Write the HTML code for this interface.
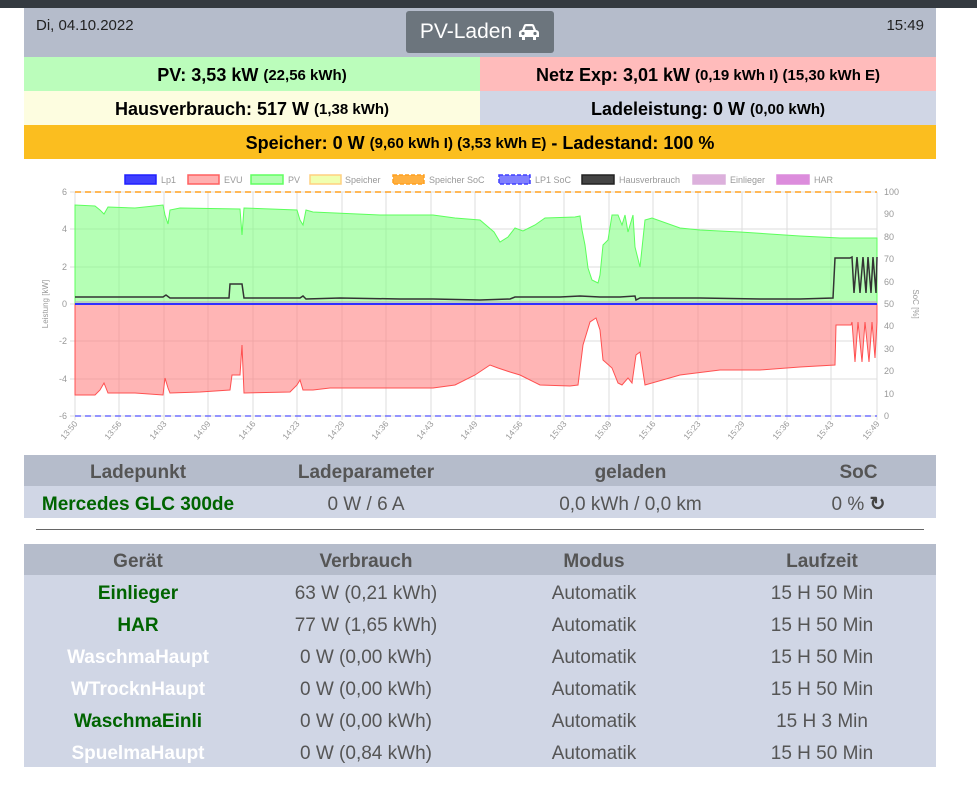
<!DOCTYPE html>
<html><head><meta charset="utf-8"><style>
*{margin:0;padding:0;box-sizing:border-box}
body{width:977px;height:786px;background:#fff;font-family:"Liberation Sans",sans-serif;position:relative;overflow:hidden}
.top{position:absolute;left:0;top:0;width:977px;height:8px;background:#343a40}
.wrap{position:absolute;left:24px;width:912px}
.hdr{top:8px;height:49px;background:#b5bccb}
.row{display:flex;height:34px;align-items:center;font-weight:bold;font-size:18px;color:#000}
.row>div{flex:1;height:100%;display:flex;align-items:center;justify-content:center;white-space:nowrap;padding-top:3px}
.row small{font-size:15px}
table{border-collapse:collapse;width:912px;font-size:19px;color:#555;text-align:center}
th{background:#b5bccb;font-weight:bold;height:31px;color:#555;padding-top:4px}
td{background:#d0d6e5;height:32px;padding-top:5px}
.g{color:#006400;font-weight:bold}
.w{color:#fff;font-weight:bold}
</style></head><body>
<div class="top"></div>
<div class="wrap hdr">
 <div style="position:absolute;left:12px;top:9px;font-size:15px;color:#222">Di, 04.10.2022</div>
 <div style="position:absolute;right:12px;top:9px;font-size:15px;color:#222">15:49</div>
 <div style="position:absolute;left:382px;top:3px;width:148px;height:42px;background:#6c757d;border-radius:3px;color:#fff;font-size:21px;display:flex;align-items:center;justify-content:center;gap:6px">PV-Laden
  <svg width="22" height="18" viewBox="0 0 22 18"><path d="M4 7 L6 2 Q6.5 1 8 1 H14 Q15.5 1 16 2 L18 7 Q21 7.5 21 10 V14 H18 V17 H15 V14 H7 V17 H4 V14 H1 V10 Q1 7.5 4 7Z M6.5 7 H15.5 L14.2 3.3 H7.8Z" fill="#fff"/><circle cx="5" cy="10.5" r="1.6" fill="#6c757d"/><circle cx="17" cy="10.5" r="1.6" fill="#6c757d"/></svg></div>
</div>
<div class="wrap" style="top:57px">
 <div class="row"><div style="background:#bbfdbb">PV: 3,53 kW&nbsp;<small>(22,56 kWh)</small></div><div style="background:#ffbbbb">Netz Exp: 3,01 kW&nbsp;<small>(0,19 kWh I) (15,30 kWh E)</small></div></div>
 <div class="row"><div style="background:#fdfde0">Hausverbrauch: 517 W&nbsp;<small>(1,38 kWh)</small></div><div style="background:#d0d6e5">Ladeleistung: 0 W&nbsp;<small>(0,00 kWh)</small></div></div>
 <div class="row" style="background:#fbbe1f"><div>Speicher: 0 W&nbsp;<small>(9,60 kWh I) (3,53 kWh E)</small>&nbsp;- Ladestand: 100 %</div></div>
</div>
<svg style="position:absolute;left:0;top:165px" width="977" height="290" viewBox="0 165 977 290" font-family="Liberation Sans" font-size="9" fill="#999">
 <g stroke-width="1.5">
  <rect x="125" y="175" width="31" height="9" fill="#4040ff" stroke="#2020ff"/><text x="161" y="183" stroke="none">Lp1</text>
  <rect x="188" y="175" width="31" height="9" fill="#ffb0b0" stroke="#ff6060"/><text x="224" y="183" stroke="none">EVU</text>
  <rect x="251" y="175" width="32" height="9" fill="#b0ffb0" stroke="#60ff60"/><text x="288" y="183" stroke="none">PV</text>
  <rect x="310" y="175" width="31" height="9" fill="#f0ffb0" stroke="#ffd080"/><text x="345" y="183" stroke="none">Speicher</text>
  <rect x="393" y="175" width="31" height="9" fill="#ffb040" stroke="#ffa020" stroke-dasharray="4 2"/><text x="429" y="183" stroke="none">Speicher SoC</text>
  <rect x="499" y="175" width="31" height="9" fill="#8080ff" stroke="#4040ff" stroke-dasharray="4 2"/><text x="535" y="183" stroke="none">LP1 SoC</text>
  <rect x="582" y="175" width="32" height="9" fill="#444" stroke="#222"/><text x="619" y="183" stroke="none">Hausverbrauch</text>
  <rect x="693" y="175" width="32" height="9" fill="#dcb0dc" stroke="#dcb0dc"/><text x="730" y="183" stroke="none">Einlieger</text>
  <rect x="777" y="175" width="32" height="9" fill="#dc8cdc" stroke="#dc8cdc"/><text x="814" y="183" stroke="none">HAR</text>
 </g>
 <g stroke="#ddd" stroke-width="1">
  <path d="M75 192V420M119 192V420M164 192V420M208 192V420M253 192V420M297 192V420M342 192V420M386 192V420M431 192V420M475 192V420M520 192V420M564 192V420M609 192V420M653 192V420M698 192V420M742 192V420M787 192V420M831 192V420M877 192V420"/>
  <path d="M70 192H877M70 229H877M70 267H877M70 304H877M70 341H877M70 379H877M70 416H877"/>
 </g>
 <path fill="rgba(120,255,120,0.55)" stroke="#5cff5c" stroke-width="1" d="M75 304 L75 205 95 206 100 210 104 214 108 207 135 208 163 205 165 215 168 224 170 210 180 208 240 209 242 235 244 208 297 210 300 220 303 225 306 210 313 212 380 215 433 215 455 218 480 220 494 232 500 242 508 237 515 228 523 231 535 225 545 218 575 217 580 216 582 230 585 245 588 268 592 280 598 283 600 275 603 245 608 240 612 215 618 215 622 225 625 215 628 232 633 215 635 247 640 267 645 220 652 218 680 228 700 230 740 232 800 236 840 238 877 238 L877 304Z"/>
 <path fill="rgba(255,120,120,0.55)" stroke="#ff5050" stroke-width="1" d="M75 304 L75 395 95 395 100 390 104 383 108 393 135 393 163 395 165 378 168 388 170 393 200 392 230 390 232 375 240 375 242 345 244 393 290 392 297 385 300 380 303 390 313 390 330 388 380 388 433 388 455 385 475 375 490 365 498 368 510 372 520 375 540 385 570 386 578 385 583 345 590 322 596 318 600 330 603 360 612 368 618 383 622 385 628 378 632 383 636 355 640 352 645 385 680 375 720 370 760 370 800 367 835 365 836 325 851 325 852 322 855 362 858 322 862 362 865 322 869 362 872 322 875 358 877 322 L877 304Z"/>
 <path fill="none" stroke="#333" stroke-width="1.5" d="M75 297 L163 297 166 295 170 298 229 298 230 284 242 284 244 298 300 298 303 296 306 299 340 298 400 299 433 299 480 300 510 299 515 297 560 297 580 296 600 297 620 297 635 296 636 300 640 298 700 298 760 299 800 299 833 298 835 258 850 258 852 257 854 293 857 257 860 293 863 257 866 293 868 257 871 293 873 257 876 293 877 257"/>
 <path fill="none" stroke="#c0a0c0" stroke-width="1" d="M75 302 H877"/>
 <path stroke="#3030ff" stroke-width="2" d="M75 304 H877"/>
 <path stroke="#ffa020" stroke-width="1.5" stroke-dasharray="6 4" d="M75 192 H877"/>
 <path stroke="#7070ff" stroke-width="1.5" stroke-dasharray="6 4" d="M75 416 H877"/>
 <g text-anchor="end"><text x="67" y="195">6</text><text x="67" y="232">4</text><text x="67" y="270">2</text><text x="67" y="307">0</text><text x="67" y="344">-2</text><text x="67" y="382">-4</text><text x="67" y="419">-6</text></g>
 <g><text x="884" y="195">100</text><text x="884" y="217">90</text><text x="884" y="240">80</text><text x="884" y="262">70</text><text x="884" y="285">60</text><text x="884" y="307">50</text><text x="884" y="329">40</text><text x="884" y="352">30</text><text x="884" y="374">20</text><text x="884" y="397">10</text><text x="884" y="419">0</text></g>
 <text transform="translate(48,304) rotate(-90)" text-anchor="middle" font-size="8">Leistung [kW]</text>
 <text transform="translate(913,304) rotate(90)" text-anchor="middle" font-size="8">SoC [%]</text>
 <g text-anchor="end" font-size="8.5">
  <text transform="translate(78,424) rotate(-50)">13:50</text><text transform="translate(122,424) rotate(-50)">13:56</text><text transform="translate(167,424) rotate(-50)">14:03</text><text transform="translate(211,424) rotate(-50)">14:09</text><text transform="translate(256,424) rotate(-50)">14:16</text><text transform="translate(300,424) rotate(-50)">14:23</text><text transform="translate(345,424) rotate(-50)">14:29</text><text transform="translate(389,424) rotate(-50)">14:36</text><text transform="translate(434,424) rotate(-50)">14:43</text><text transform="translate(478,424) rotate(-50)">14:49</text><text transform="translate(523,424) rotate(-50)">14:56</text><text transform="translate(567,424) rotate(-50)">15:03</text><text transform="translate(612,424) rotate(-50)">15:09</text><text transform="translate(656,424) rotate(-50)">15:16</text><text transform="translate(701,424) rotate(-50)">15:23</text><text transform="translate(745,424) rotate(-50)">15:29</text><text transform="translate(790,424) rotate(-50)">15:36</text><text transform="translate(834,424) rotate(-50)">15:43</text><text transform="translate(880,424) rotate(-50)">15:49</text>
 </g>
</svg>
<div class="wrap" style="top:455px">
<table><tr><th style="width:25%">Ladepunkt</th><th style="width:25%">Ladeparameter</th><th style="width:33%">geladen</th><th>SoC</th></tr>
<tr><td class="g" style="height:30px">Mercedes GLC 300de</td><td>0 W / 6 A</td><td>0,0 kWh / 0,0 km</td><td>0 % <span style="font-weight:bold;color:#444">&#x21BB;</span></td></tr></table>
</div>
<div style="position:absolute;left:36px;top:529px;width:888px;height:1px;background:#666"></div>
<div class="wrap" style="top:544px">
<table><tr><th style="width:25%">Gerät</th><th style="width:25%">Verbrauch</th><th style="width:25%">Modus</th><th>Laufzeit</th></tr>
<tr><td class="g">Einlieger</td><td>63 W (0,21 kWh)</td><td>Automatik</td><td>15 H 50 Min</td></tr>
<tr><td class="g">HAR</td><td>77 W (1,65 kWh)</td><td>Automatik</td><td>15 H 50 Min</td></tr>
<tr><td class="w">WaschmaHaupt</td><td>0 W (0,00 kWh)</td><td>Automatik</td><td>15 H 50 Min</td></tr>
<tr><td class="w">WTrocknHaupt</td><td>0 W (0,00 kWh)</td><td>Automatik</td><td>15 H 50 Min</td></tr>
<tr><td class="g">WaschmaEinli</td><td>0 W (0,00 kWh)</td><td>Automatik</td><td>15 H 3 Min</td></tr>
<tr><td class="w">SpuelmaHaupt</td><td>0 W (0,84 kWh)</td><td>Automatik</td><td>15 H 50 Min</td></tr>
</table></div>
</body></html>
